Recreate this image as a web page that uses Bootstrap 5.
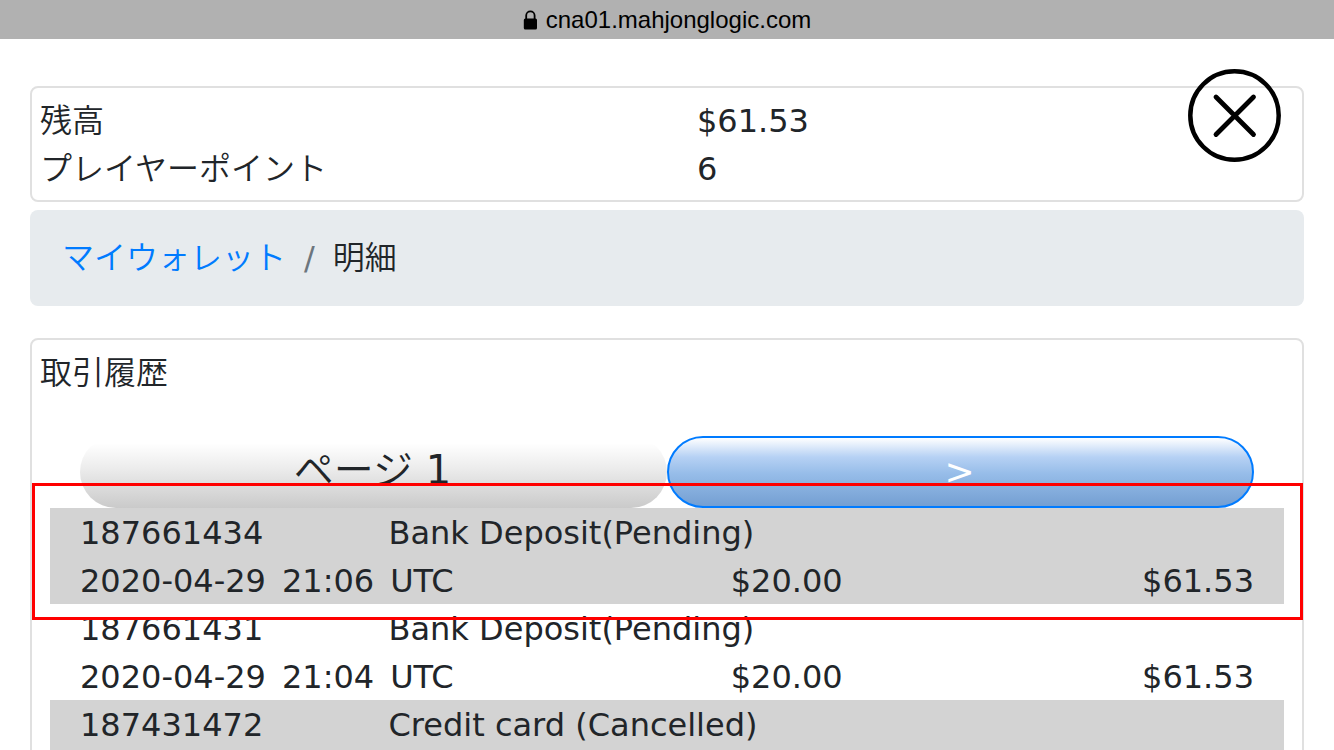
<!DOCTYPE html>
<html lang="ja">
<head>
<meta charset="utf-8">
<meta name="viewport" content="width=device-width, initial-scale=1">
<title>明細</title>
<link href="https://cdn.jsdelivr.net/npm/bootstrap@5.3.0/dist/css/bootstrap.min.css" rel="stylesheet">
<style>
  body { font: 32px/48px "DejaVu Sans", "Noto Sans CJK JP", sans-serif; color: #212529; background: #fff; }
  .jp { font-weight: 350; }
  .address-bar { height: 39px; background: #b1b1b1; color: #000; font: 24px/39px "Liberation Sans", sans-serif; }
  .page-scroll { scrollbar-width: none; padding: 47px 30px 0; min-height: 0; }
  .page-scroll::-webkit-scrollbar { display: none; }
  .panel { border: 2px solid #e0e0e0; border-radius: 8px; padding: 9px 0 7px; }
  .panel > .row > *, .panel > h1 { padding-left: 8px; }
  .panel > h1 { font-size: 32px; line-height: 48px; margin: 0 0 39px; }
  .amount-col { padding-left: 30px !important; }
  .close-btn { top: -19px; right: 21px; width: 93px; height: 93px; }
  .crumbs { background: #e7ebee; border-radius: 8px; padding: 24px 32px; margin: 8px 0 32px; --bs-breadcrumb-item-padding-x: 18px; --bs-breadcrumb-font-size: 32px; --bs-breadcrumb-divider-color: #6c757d; }
  .crumbs li::before { font-weight: 400; }
  .crumbs a { color: #007bff; text-decoration: none; }
  .crumbs .active { color: #212529; }
  .pager { padding: 0 48px; }
  .panel > .pager > .pill { height: 72px; border-radius: 36px; border: 2px solid transparent; font-size: 40px; line-height: 64px; text-align: center; padding: 0 2px 0 0; }
  .pager > .pill-page { background: linear-gradient(#fff 10%, #ececec 45%, #cacaca) border-box; }
  .panel > .pager > .pill-next { background: linear-gradient(#fff, #b6d1f4 28%, #97bde9 52%, #749fd2); border-color: #007bff; color: #fff; font-size: 36px; }
  .history { margin: 0 18px; }
  .history table { table-layout: fixed; width: 100%; border-collapse: collapse; }
  .history td { padding: 2px 30px 0; height: 48px; line-height: 46px; white-space: nowrap; }
  .history tbody:nth-of-type(odd) { background: #d3d3d3; }
  .highlight { top: -25px; left: -18px; right: -19px; height: 137px; border: 3px solid #f00; pointer-events: none; }
</style>
</head>
<body class="vh-100 overflow-hidden d-flex flex-column">
<header class="address-bar d-flex justify-content-center align-items-center flex-shrink-0">
  <svg width="15" height="20" viewBox="0 0 15 20" class="me-2" aria-hidden="true"><path d="M3.200 9V5.500a4.200 4.200 0 0 1 8.400 0V9" fill="none" stroke="#000" stroke-width="1.800"/><rect x="0.800" y="8.500" width="13.200" height="11" rx="1.500"/></svg>
  <span>cna01.mahjonglogic.com</span>
</header>
<main class="page-scroll flex-grow-1 overflow-auto">
  <section class="panel position-relative">
    <div class="row g-0"><div class="col-6 jp">残高</div><div class="col-6 amount-col">$61.53</div></div>
    <div class="row g-0"><div class="col-6 jp">プレイヤーポイント</div><div class="col-6 amount-col">6</div></div>
    <button type="button" class="close-btn btn p-0 border-0 position-absolute d-flex" aria-label="閉じる">
      <svg width="93" height="93" viewBox="0 0 93 93" fill="none" stroke="#000" stroke-linecap="round"><circle cx="46.500" cy="46.500" r="44.200" stroke-width="4.500"/><path d="M28 28l37.500 37.500M65.500 28L28 65.500" stroke-width="4.800"/></svg>
    </button>
  </section>
  <nav aria-label="breadcrumb">
    <ol class="breadcrumb crumbs">
      <li class="breadcrumb-item jp"><a href="#">マイウォレット</a></li>
      <li class="breadcrumb-item active jp" aria-current="page">明細</li>
    </ol>
  </nav>
  <section class="panel">
    <h1 class="jp">取引履歴</h1>
    <div class="pager row g-0">
      <div class="col-6 pill pill-page"><span class="jp">ページ</span> 1</div>
      <button type="button" class="col-6 pill pill-next">&gt;</button>
    </div>
    <div class="history position-relative">
      <table>
        <colgroup><col style="width:25%"><col style="width:16.667%"><col style="width:25%"><col style="width:33.333%"></colgroup>
        <tbody>
          <tr><td>187661434</td><td colspan="3">Bank Deposit(Pending)</td></tr>
          <tr><td colspan="2"><div class="d-flex gap-3"><span>2020-04-29</span> <span>21:06</span> <span>UTC</span></div></td><td class="text-end">$20.00</td><td class="text-end">$61.53</td></tr>
        </tbody>
        <tbody>
          <tr><td>187661431</td><td colspan="3">Bank Deposit(Pending)</td></tr>
          <tr><td colspan="2"><div class="d-flex gap-3"><span>2020-04-29</span> <span>21:04</span> <span>UTC</span></div></td><td class="text-end">$20.00</td><td class="text-end">$61.53</td></tr>
        </tbody>
        <tbody>
          <tr><td>187431472</td><td colspan="3">Credit card (Cancelled)</td></tr>
          <tr><td colspan="4"></td></tr>
        </tbody>
      </table>
      <div class="highlight position-absolute"></div>
    </div>
  </section>
</main>
<script src="https://cdn.jsdelivr.net/npm/bootstrap@5.3.0/dist/js/bootstrap.bundle.min.js"></script>
</body>
</html>
